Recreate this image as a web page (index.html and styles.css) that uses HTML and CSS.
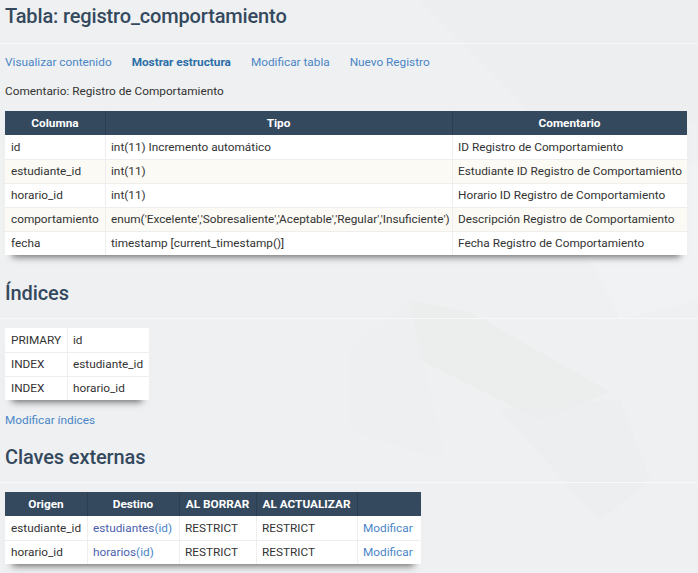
FILE: index.html
```html
<!DOCTYPE html>
<html lang="es">
<head>
<meta charset="utf-8">
<title>Tabla: registro_comportamiento</title>
<link rel="stylesheet" href="styles.css">
</head>
<body>
<div class="bg">
  <svg class="bg-shapes" width="698" height="573" viewBox="0 0 698 573" preserveAspectRatio="none">
    <polygon points="420,0 698,0 698,120 560,140" fill="#eaeced" opacity="0.5"/>
    <polygon points="410,300 420,360 540,420 610,392 470,312" fill="#e9ebec" opacity="0.5"/>
    <polygon points="350,350 410,300 445,460 350,430" fill="#eceeef" opacity="0.5"/>
    <polygon points="500,410 600,520 650,480 620,400" fill="#eaeced" opacity="0.5"/>
    <polygon points="0,140 120,110 180,240 0,260" fill="#f2f3f4" opacity="0.5"/>
    <polygon points="560,200 698,160 698,300 620,320" fill="#f3f4f5" opacity="0.5"/>
  </svg>
</div>
<main class="page">
  <h1 class="title">Tabla: registro_comportamiento</h1>
  <hr class="rule">
  <nav class="tabs">
    <a href="#" class="tab">Visualizar contenido</a>
    <a href="#" class="tab active">Mostrar estructura</a>
    <a href="#" class="tab">Modificar tabla</a>
    <a href="#" class="tab">Nuevo Registro</a>
  </nav>
  <p class="comment">Comentario: Registro de Comportamiento</p>

  <table class="grid structure">
    <colgroup><col class="c1"><col class="c2"><col class="c3"></colgroup>
    <thead>
      <tr><th>Columna</th><th>Tipo</th><th>Comentario</th></tr>
    </thead>
    <tbody>
      <tr><td>id</td><td>int(11) Incremento automático</td><td>ID Registro de Comportamiento</td></tr>
      <tr class="odd"><td>estudiante_id</td><td>int(11)</td><td>Estudiante ID Registro de Comportamiento</td></tr>
      <tr><td>horario_id</td><td>int(11)</td><td>Horario ID Registro de Comportamiento</td></tr>
      <tr class="odd"><td>comportamiento</td><td>enum('Excelente','Sobresaliente','Aceptable','Regular','Insuficiente')</td><td>Descripción Registro de Comportamiento</td></tr>
      <tr><td>fecha</td><td>timestamp [current_timestamp()]</td><td>Fecha Registro de Comportamiento</td></tr>
    </tbody>
  </table>

  <h2 class="section">Índices</h2>
  <hr class="rule rule-sec">
  <table class="grid indexes">
    <colgroup><col class="i1"><col class="i2"></colgroup>
    <tbody>
      <tr><td>PRIMARY</td><td>id</td></tr>
      <tr><td>INDEX</td><td>estudiante_id</td></tr>
      <tr><td>INDEX</td><td>horario_id</td></tr>
    </tbody>
  </table>
  <p class="more"><a href="#" class="link">Modificar índices</a></p>

  <h2 class="section section-fk">Claves externas</h2>
  <hr class="rule rule-sec">
  <table class="grid fk">
    <colgroup><col class="f1"><col class="f2"><col class="f3"><col class="f4"><col class="f5"></colgroup>
    <thead>
      <tr><th>Origen</th><th>Destino</th><th>AL BORRAR</th><th>AL ACTUALIZAR</th><th></th></tr>
    </thead>
    <tbody>
      <tr><td>estudiante_id</td><td><a href="#" class="dest">estudiantes</a><a href="#" class="link">(id)</a></td><td>RESTRICT</td><td>RESTRICT</td><td><a href="#" class="link">Modificar</a></td></tr>
      <tr><td>horario_id</td><td><a href="#" class="dest">horarios</a><a href="#" class="link">(id)</a></td><td>RESTRICT</td><td>RESTRICT</td><td><a href="#" class="link">Modificar</a></td></tr>
    </tbody>
  </table>
</main>
</body>
</html>
```
FILE: styles.css
```css
html, body {
  margin: 0;
  padding: 0;
}
body {
  background: #eff0f1;
  font-family: Roboto, "Liberation Sans", sans-serif;
  font-size: 11.8px;
  color: #333333;
  width: 698px;
  height: 573px;
  overflow: hidden;
  position: relative;
}
.bg {
  position: absolute;
  inset: 0;
  z-index: 0;
}
.bg-shapes {
  display: block;
}
.page {
  position: relative;
  z-index: 1;
  padding: 0 5px;
}
.title {
  margin: 4px 0 0;
  font-size: 20px;
  letter-spacing: -0.15px;
  line-height: 24px;
  font-weight: 500;
  color: #34495e;
}
.rule {
  margin: 15px -5px 0;
  border: 0;
  height: 1px;
  background: #f7f8f8;
}
.tabs {
  display: flex;
  gap: 20px;
  margin-top: 10px;
  line-height: 16px;
}
.tab {
  color: #4a86c8;
  text-decoration: none;
}
.tab.active {
  color: #2b6ea8;
  font-weight: 700;
}
.comment {
  margin: 13px 0 0;
  line-height: 16px;
}
.grid {
  border-collapse: separate;
  border-spacing: 0;
  table-layout: fixed;
  background: #ffffff;
  box-shadow: 0 9px 7px -7px rgba(0, 0, 0, 0.55);
}
.grid th {
  background: #34495e;
  color: #ffffff;
  font-weight: 700;
  height: 24px;
  padding: 0 6px;
  text-align: center;
  white-space: nowrap;
  border: 0;
  box-shadow: inset 1px 0 0 #2c3e50;
}
.grid th:first-child {
  box-shadow: none;
}
.grid td {
  height: 24px;
  padding: 0 6px;
  border: 0;
  box-shadow: inset 1px 1px 0 #eeeeee;
  white-space: nowrap;
  overflow: hidden;
  text-align: left;
}
.grid td:first-child {
  box-shadow: inset 0 1px 0 #eeeeee;
}
.grid tbody tr:first-child td {
  box-shadow: inset 1px 0 0 #eeeeee;
}
.grid tbody tr:first-child td:first-child {
  box-shadow: none;
}
.grid tr.odd td {
  background: #fbfaf5;
}
.structure {
  margin-top: 12px;
  width: 682px;
}
.structure .c1 { width: 100px; }
.structure .c2 { width: 347px; }
.structure .c3 { width: 235px; }
.section {
  margin: 26px 0 0;
  font-size: 20px;
  letter-spacing: -0.1px;
  line-height: 24px;
  font-weight: 500;
  color: #34495e;
}
.rule-sec {
  margin-top: 13px;
}
.indexes {
  margin-top: 9px;
  width: 144px;
}
.indexes .i1 { width: 62px; }
.indexes .i2 { width: 82px; }
.more {
  margin: 12px 0 0;
  line-height: 16px;
}
.link {
  color: #4a86c8;
  text-decoration: none;
}
.dest {
  color: #4b5fae;
  text-decoration: none;
}
.section-fk {
  margin-top: 17px;
}
.fk {
  margin-top: 9px;
  width: 416px;
}
.fk .f1 { width: 82px; }
.fk .f2 { width: 92px; }
.fk .f3 { width: 77px; }
.fk .f4 { width: 101px; }
.fk .f5 { width: 64px; }
```
